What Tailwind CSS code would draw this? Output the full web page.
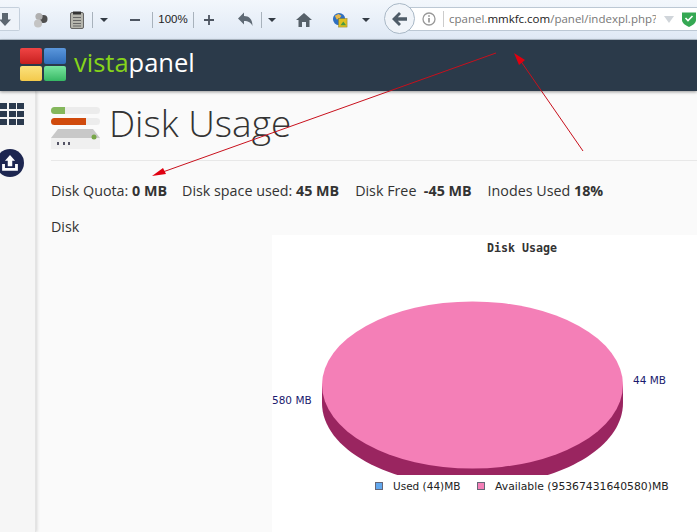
<!DOCTYPE html>
<html lang="en">
<head>
    <meta charset="UTF-8">
    <title>Disk Usage</title>
    <script src="https://cdn.jsdelivr.net/npm/@tailwindcss/browser@4"></script>
</head>
<body class="relative w-[697px] h-[532px] overflow-hidden bg-[#fafafa] font-['Open_Sans',sans-serif] text-[#333]">
    <!-- browser toolbar -->
    <div class="h-[40px] flex items-center bg-gradient-to-b from-[#f3f7fc] to-[#dfe9f5] border-b border-[#b4c0cc] font-['Liberation_Sans',sans-serif] text-[#4d5561]">
        <div class="w-[20px] h-[24px] mt-[-1px] shrink-0 flex items-center justify-end pr-[8px] border border-l-0 border-[#c5d0dc] rounded-r-[2px] bg-[#eef3f9]">
            <svg class="shrink-0" width="12" height="13" viewBox="0 0 12 13"><path d="M3 0h6v6.500h3L6 13 0 6.500h3z" fill="#5c6670"/></svg>
        </div>
        <svg class="ml-[13px] shrink-0" width="15" height="16" viewBox="0 0 15 16"><circle cx="10.500" cy="7" r="4" fill="#4f4f4f"/><circle cx="6" cy="4.500" r="3.600" fill="#b0b0b0"/><circle cx="5" cy="11.500" r="4" fill="#c4c4c4"/></svg>
        <svg class="ml-[22px] shrink-0" width="14" height="18" viewBox="0 0 14 18"><rect x="0.500" y="1.500" width="13" height="16" rx="1.500" fill="#b5b5ad" stroke="#666"/><rect x="3" y="0.500" width="8" height="3" fill="#333"/><path d="M3 6.500h8M3 9.500h8M3 12.500h8M3 15h8" stroke="#666"/></svg>
        <div class="ml-[8px] w-px h-[16px] shrink-0 bg-[#a8b2bc]"></div>
        <div class="ml-[7px] w-0 h-0 shrink-0 border-x-[4px] border-x-transparent border-t-[4px] border-t-[#333b44]"></div>
        <div class="ml-[22px] w-[10px] h-[2px] shrink-0 bg-[#4d5561]"></div>
        <div class="ml-[12px] w-px h-[16px] shrink-0 bg-[#a8b2bc]"></div>
        <div class="w-[40px] shrink-0 text-center text-[11.500px] text-[#222]">100%</div>
        <div class="w-px h-[16px] shrink-0 bg-[#a8b2bc]"></div>
        <svg class="ml-[10px] shrink-0" width="10" height="10" viewBox="0 0 11 11"><path d="M4.500 0h2v4.500H11v2H6.500V11h-2V6.500H0v-2h4.500z" fill="#4d5561"/></svg>
        <svg class="ml-[24px] shrink-0" width="15" height="15" viewBox="0 0 15 14"><path d="M6 0v3.500c5 0 8.500 3 8.500 10-1.500-3.500-4-5-8.500-5V12L0 6z" fill="#5f6a75"/></svg>
        <div class="ml-[8px] w-px h-[16px] shrink-0 bg-[#a8b2bc]"></div>
        <div class="ml-[6px] w-0 h-0 shrink-0 border-x-[4px] border-x-transparent border-t-[4px] border-t-[#333b44]"></div>
        <svg class="ml-[20px] shrink-0" width="16" height="14" viewBox="0 0 16 14"><path d="M8 0l8 7h-2.500v7h-3.500V9H6v5H2.500V7H0z" fill="#566069"/></svg>
        <svg class="ml-[20px] shrink-0" width="16" height="16" viewBox="0 0 17 17"><circle cx="7.500" cy="7.500" r="6.500" fill="#2f6fc0"/><path d="M3 4l4-2 3 2-2 3-3 1z" fill="#e8b84a"/><rect x="7" y="7" width="9" height="9" fill="#e0c020" stroke="#8a7a20" stroke-width="0.500"/><path d="M9 14l3-4 3 4z" fill="#4a9a40"/></svg>
        <div class="ml-[14px] w-0 h-0 shrink-0 border-x-[4px] border-x-transparent border-t-[4px] border-t-[#333b44]"></div>
        <!-- url bar -->
        <div class="relative ml-[30px] flex-1 min-w-0 h-[24px] mt-[-1px] flex items-center bg-white border-y border-[#bcc8d4] pl-[22px]">
            <div class="absolute left-[-16px] top-[-5px] w-[31px] h-[31px] rounded-full bg-[#f0f4f9] border border-[#a9b8c6] flex items-center justify-center">
                <svg width="15" height="14" viewBox="0 0 15 14"><path d="M7 0l2 2-3.200 3.300H15v3.400H5.800L9 12l-2 2L0 7z" fill="#4f5c68"/></svg>
            </div>
            <svg class="shrink-0" width="14" height="14" viewBox="0 0 14 14"><circle cx="7" cy="7" r="6" fill="none" stroke="#999" stroke-width="1.300"/><path d="M7 6v4.500M7 3.300v1.500" stroke="#888" stroke-width="1.500"/></svg>
            <div class="ml-[7px] w-px h-[16px] shrink-0 bg-[#ccc]"></div>
            <div class="ml-[5px] w-[207px] shrink-0 overflow-hidden text-[11.500px] font-['Open_Sans',sans-serif] text-[#777] whitespace-nowrap">cpanel.<span class="text-[#222]">mmkfc.com</span>/panel/indexpl.php?</div>
            <div class="ml-[8px] w-0 h-0 shrink-0 border-x-[5px] border-x-transparent border-t-[7px] border-t-[#d0d5da]"></div>
            <svg class="ml-[8px] shrink-0" width="14" height="16" viewBox="0 0 14 16"><path d="M0 1.500h14V9c0 3-3 5-7 7-4-2-7-4-7-7z" fill="#35a853"/><path d="M3.500 7l2.500 2.500 4.500-4.500" fill="none" stroke="#fff" stroke-width="1.600"/></svg>
        </div>
    </div>

    <!-- panel header -->
    <div class="h-[51px] flex items-center pl-[20px] pb-[2px] bg-[#2b3a4a] shadow-[0_1px_3px_rgba(0,0,0,0.4)] relative z-10">
        <div class="grid grid-cols-2 gap-[2px] w-[46px]">
            <div class="h-[16px] rounded-[2px] bg-gradient-to-b from-[#f04444] to-[#c81e1e]"></div>
            <div class="h-[16px] rounded-[2px] bg-gradient-to-b from-[#5b97dc] to-[#2e6cb8]"></div>
            <div class="h-[15px] rounded-[2px] bg-gradient-to-b from-[#fbe27c] to-[#f3c94a]"></div>
            <div class="h-[15px] rounded-[2px] bg-gradient-to-b from-[#78e6a0] to-[#35b864]"></div>
        </div>
        <div class="ml-[8px] text-[25.500px] leading-none font-medium mt-[-3px] text-white"><span class="text-[#86d41a]">vista</span>panel</div>
    </div>

    <div class="flex h-[441px]">
        <!-- sidebar -->
        <div class="w-[36px] shrink-0 bg-[#f6f6f6] border-r border-[#e4e4e4] shadow-[1px_0_3px_rgba(0,0,0,0.15)] flex flex-col items-end pr-[11px]">
            <div class="mt-[12px] grid grid-cols-3 gap-[2px]">
                <div class="w-[7px] h-[6px] bg-[#2b3a4e]"></div><div class="w-[7px] h-[6px] bg-[#2b3a4e]"></div><div class="w-[7px] h-[6px] bg-[#2b3a4e]"></div>
                <div class="w-[7px] h-[6px] bg-[#2b3a4e]"></div><div class="w-[7px] h-[6px] bg-[#2b3a4e]"></div><div class="w-[7px] h-[6px] bg-[#2b3a4e]"></div>
                <div class="w-[7px] h-[6px] bg-[#2b3a4e]"></div><div class="w-[7px] h-[6px] bg-[#2b3a4e]"></div><div class="w-[7px] h-[6px] bg-[#2b3a4e]"></div>
            </div>
            <div class="mt-[24px] w-[28px] h-[28px] shrink-0 rounded-full bg-[#1d2650] flex items-center justify-center">
                <svg width="18" height="17" viewBox="0 0 16 15"><path d="M8 0l4.500 5H10v5H6V5H3.500z" fill="#fff"/><path d="M1 8v6h14V8h-2.500v3.500h-9V8z" fill="#fff"/></svg>
            </div>
        </div>

        <!-- main -->
        <div class="flex-1 min-w-0 flex flex-col pl-[15px]">
            <div class="h-[70px] shrink-0 flex items-start border-b border-[#e8e8e8]">
                <svg class="mt-[16px] shrink-0" width="49" height="42" viewBox="0 0 49 42">
                    <rect x="0" y="0" width="49" height="7" rx="3.500" fill="#ececec"/>
                    <path d="M3.500 0H14v7H3.500a3.500 3.500 0 0 1 0-7z" fill="#84b75c"/>
                    <rect x="0" y="11" width="49" height="7" rx="3.500" fill="#ececec"/>
                    <path d="M3.500 11H35v7H3.500a3.500 3.500 0 0 1 0-7z" fill="#d04a0c"/>
                    <path d="M7 22h35l7 9H0z" fill="#c8c8c8"/>
                    <rect x="0" y="31" width="49" height="11" fill="#f0f0f0"/>
                    <circle cx="43" cy="30" r="2.500" fill="#77a648"/>
                    <path d="M7 35v3M13 35v3M18 35v3" stroke="#556" stroke-width="2"/>
                </svg>
                <h1 class="ml-[9px] mt-[7px] text-[37px] leading-[50px] font-light text-[#333] whitespace-nowrap">Disk Usage</h1>
            </div>
            <div class="mt-[20px] flex text-[14.300px] leading-[20px] whitespace-nowrap">
                <span>Disk Quota: <b>0 MB</b></span>
                <span class="ml-[15px]">Disk space used: <b>45 MB</b></span>
                <span class="ml-[16px]">Disk Free &nbsp;<b>-45 MB</b></span>
                <span class="ml-[16px]">Inodes Used <b>18%</b></span>
            </div>
            <div class="mt-[16px] text-[14.300px] leading-[20px]">Disk</div>

            <!-- chart -->
            <svg class="ml-[221px] mt-[-2px] shrink-0" width="425" height="297" viewBox="0 0 425 297" font-family="'DejaVu Sans', sans-serif">
                <rect width="425" height="297" fill="#fff"/>
                <text x="250" y="17" font-family="'DejaVu Sans Mono', monospace" font-weight="700" font-size="11.600" fill="#333" text-anchor="middle">Disk Usage</text>
                <path d="M50 150v18c0 46 67 83 150.500 83S351 214 351 168v-18z" fill="#9a2560"/>
                <ellipse cx="200.500" cy="150" rx="150.500" ry="83.500" fill="#f47fb7"/>
                <rect x="0" y="240" width="425" height="57" fill="#fff"/>
                <text x="0" y="169" font-size="10.500" fill="#1a1a6e">580 MB</text>
                <text x="361" y="149" font-size="10.500" fill="#1a1a6e">44 MB</text>
                <rect x="103.500" y="247.500" width="7" height="7" fill="#62a8ee" stroke="#667"/>
                <text x="121" y="255" font-size="10.500" fill="#222">Used (44)MB</text>
                <rect x="205.500" y="247.500" width="7" height="7" fill="#f47fb7" stroke="#667"/>
                <text x="223" y="255" font-size="10.800" fill="#222">Available (95367431640580)MB</text>
            </svg>
        </div>
    </div>

    <!-- red annotation arrows -->
    <svg class="absolute left-0 top-0 z-20" width="697" height="532" viewBox="0 0 697 532">
        <path d="M496 53 L160 173" stroke="#c8101c" stroke-width="1" fill="none"/>
        <path d="M152 176 L163 168 L166 174z" fill="#e00010"/>
        <path d="M583 151 L520 60" stroke="#c8101c" stroke-width="1" fill="none"/>
        <path d="M514 53 L525 60 L519 65z" fill="#e00010"/>
    </svg>
</body>
</html>
